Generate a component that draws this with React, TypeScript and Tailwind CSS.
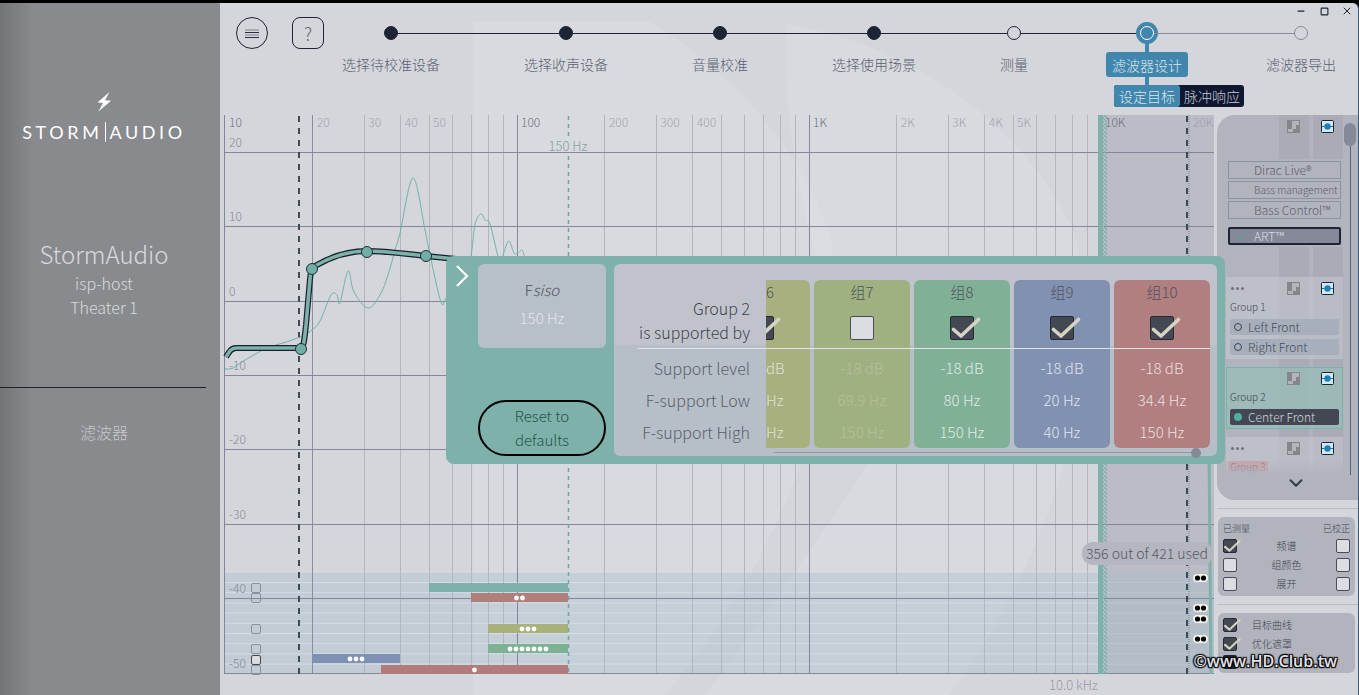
import React from 'react';
import { ChevronDown, Minus, Square, X } from 'lucide-react';

type Point = [number, number];

const steps = [
  { label: '选择待校准设备', state: 'done' },
  { label: '选择收声设备', state: 'done' },
  { label: '音量校准', state: 'done' },
  { label: '选择使用场景', state: 'done' },
  { label: '测量', state: 'open' },
  { label: '滤波器设计', state: 'active' },
  { label: '滤波器导出', state: 'todo' },
];

// The first column is scrolled half out of view, so only the tail of its texts shows
const supportGroups = [
  { name: '6', on: true, level: 'dB', low: 'Hz', high: 'Hz', bg: 'bg-[#a8b07f]', text: 'text-[#dfe2d4]', clipped: true },
  { name: '组7', on: false, level: '-18 dB', low: '69.9 Hz', high: '150 Hz', bg: 'bg-[#9fb180]', text: 'text-[#b3c09e]' },
  { name: '组8', on: true, level: '-18 dB', low: '80 Hz', high: '150 Hz', bg: 'bg-[#80b197]', text: 'text-[#dfebe5]' },
  { name: '组9', on: true, level: '-18 dB', low: '20 Hz', high: '40 Hz', bg: 'bg-[#8191b2]', text: 'text-[#dfe4ee]' },
  { name: '组10', on: true, level: '-18 dB', low: '34.4 Hz', high: '150 Hz', bg: 'bg-[#b17f7f]', text: 'text-[#eddfe0]' },
];

const supportRows: { label: string; key: 'level' | 'low' | 'high' }[] = [
  { label: 'Support level', key: 'level' },
  { label: 'F-support Low', key: 'low' },
  { label: 'F-support High', key: 'high' },
];

// Plot area: 292 units for each decade, starting at 10 Hz
const freqX = (f: number) => 1 + 292 * Math.log10(f / 10);

const minorLines = [20, 30, 40, 50, 60, 70, 80, 90, 200, 300, 400, 500, 600, 700, 800, 900, 2000, 3000, 4000, 5000, 6000, 7000, 8000, 9000];
const majorLines = [100, 1000, 10000];

const freqLabels = [
  { f: 10, label: '10', major: true },
  { f: 20, label: '20' },
  { f: 30, label: '30' },
  { f: 40, label: '40' },
  { f: 50, label: '50' },
  { f: 100, label: '100', major: true },
  { f: 200, label: '200' },
  { f: 300, label: '300' },
  { f: 400, label: '400' },
  { f: 1000, label: '1K', major: true },
  { f: 2000, label: '2K' },
  { f: 3000, label: '3K' },
  { f: 4000, label: '4K' },
  { f: 5000, label: '5K' },
  { f: 10000, label: '10K', major: true },
  { f: 20000, label: '20K' },
];

const dbLines = [
  { label: '20', y: 38 },
  { label: '10', y: 112 },
  { label: '0', y: 187 },
  { label: '-10', y: 261 },
  { label: '-20', y: 335 },
  { label: '-30', y: 410 },
  { label: '-40', y: 484 },
  { label: '-50', y: 559 },
];

const supportBars = [
  { x: 205, w: 139, y: 468, fill: '#7db1a9', dots: 0 },
  { x: 247, w: 97, y: 478, fill: '#b17f7b', dots: 2 },
  { x: 264, w: 80, y: 509, fill: '#a8b07b', dots: 3 },
  { x: 264, w: 80, y: 529, fill: '#7db194', dots: 7 },
  { x: 88, w: 88, y: 539, fill: '#7f90b5', dots: 3 },
  { x: 157, w: 187, y: 550, fill: '#b17b7b', dots: 1 },
];

const chartBoxes = [468, 478, 509, 529, 540, 550];
const eyeRows = [463, 493, 504, 524];

const measured: Point[] = [
  [1, 254], [9, 253], [21, 245], [43, 233], [59, 228], [76, 222], [88, 215], [96, 206], [107, 180], [113, 180],
  [116, 188], [124, 156], [130, 177], [144, 193], [156, 180], [164, 160], [171, 135], [176, 118], [189, 63],
  [201, 115], [205, 135], [217, 187], [223, 182], [240, 165], [247, 141], [251, 109], [257, 99], [261, 105],
  [266, 109], [274, 141], [278, 146], [280, 137], [285, 126], [290, 138], [294, 138], [298, 135], [301, 144],
];

const smooth = (pts: Point[]) =>
  pts.slice(1).reduce((d, p, i) => {
    const p0 = pts[i - 1] ?? pts[i];
    const p1 = pts[i];
    const p3 = pts[i + 2] ?? p;
    return `${d} C${p1[0] + (p[0] - p0[0]) / 6} ${p1[1] + (p[1] - p0[1]) / 6} ${p[0] - (p3[0] - p1[0]) / 6} ${p[1] - (p3[1] - p1[1]) / 6} ${p[0]} ${p[1]}`;
  }, `M${pts[0][0]} ${pts[0][1]}`);

const targetPath = 'M2 242 C5 237 7 233 12 233 L75 233 C80 233 80 228 82 210 L86 164 Q87 153 91 151 C108 141 124 136 143 136 C162 136 182 139 202 141 L232 144';

interface TickProps {
  label?: string;
  checked?: boolean;
  small?: boolean;
}

const Tick: React.FC<TickProps> = ({ label, checked, small }) => (
  <span className={`relative inline-block align-top ${small ? 'size-[14px]' : 'size-6'}`}>
    <input
      type="checkbox"
      aria-label={label}
      defaultChecked={checked}
      className="peer absolute inset-0 size-full appearance-none rounded-xs border border-[#4a4d57] bg-[#dcdde3] checked:border-[#252a36] checked:bg-[#434853]"
    />
    <svg viewBox="0 0 24 24" className="pointer-events-none absolute inset-0 hidden size-full overflow-visible peer-checked:block">
      <path d="M3.5 13.5 L11 20 L28.5 3.5" fill="none" stroke="#d6d4c2" strokeWidth="3.6" strokeLinecap="round" strokeLinejoin="round" />
    </svg>
  </span>
);

const ChannelIcons: React.FC = () => (
  <div className="flex justify-end gap-[21px] pr-[9px]">
    <svg viewBox="0 0 13 13" className="size-[13px]">
      <rect width="13" height="13" fill="#85868c" />
      <path d="M5 1H12V5H9V9H6V12H1V9H5Z" fill="#b4b5bb" />
    </svg>
    <svg viewBox="0 0 13 13" className="size-[13px]">
      <rect x="0.5" y="0.5" width="12" height="12" rx="1" fill="#d3e9f5" stroke="#1b2230" />
      <path d="M1 6.5H12" stroke="#1d7fb5" />
      <circle cx="6.5" cy="6.5" r="3.2" fill="#1d7fb5" />
    </svg>
  </div>
);

interface GroupCardProps {
  name: string;
  channels: string[];
  active?: boolean;
  tint?: boolean;
}

const GroupCard: React.FC<GroupCardProps> = ({ name, channels, active, tint }) => (
  <section className={`relative ${active ? 'bg-[#98bcb8]/75 outline-1 -outline-offset-1 outline-[#7db1a9]' : 'bg-[#c6c8d0]/60'}`}>
    {!active && (
      <span className="absolute top-[10px] left-[5px] flex gap-[2px]">
        <i className="size-[3px] rounded-full bg-[#70737e]" />
        <i className="size-[3px] rounded-full bg-[#70737e]" />
        <i className="size-[3px] rounded-full bg-[#70737e]" />
      </span>
    )}
    <div className="pt-[5px]"><ChannelIcons /></div>
    <h3 className={`mt-[6px] ml-[2px] w-max px-[2px] text-[10px] leading-[12px] ${tint ? 'bg-[#c9a3a6] text-[#7d7178]' : 'text-[#40434e]'}`}>{name}</h3>
    {channels.length > 0 && (
      <div className="flex flex-col gap-1 px-1 pt-[6px] pb-1">
        {channels.map(c => (
          <button
            key={c}
            type="button"
            className={`flex h-4 items-center gap-[6px] rounded-xs pl-1 text-xs leading-4 ${active ? 'bg-[#434753] text-[#d3d5db]' : 'bg-[#a6afbb] text-[#484c58]'}`}
          >
            <span className={`size-2 rounded-full ${active ? 'bg-[#4fae9c]' : 'border border-[#40434e]'}`} />
            {c}
          </button>
        ))}
      </div>
    )}
  </section>
);

const Sidebar: React.FC = () => (
  <aside className="w-[220px] shrink-0 bg-linear-to-r from-[#747577] via-[#898a8d] via-15% to-[#898a8d] pr-3 text-center text-[#d9dadd]">
    <svg viewBox="0 0 14 20" className="mx-auto mt-[89px] h-5 w-[14px]">
      <path d="M12.5 0 L0.5 10.5 L6 11 L1.5 19.5 L14 8.8 L8 8.3 Z" fill="#fff" />
    </svg>
    <div className="mt-2 flex items-center justify-center gap-[3px] font-['Lato'] text-lg leading-6 font-normal text-white">
      <span className="tracking-[0.2em]">STORM</span>
      <i className="h-5 w-px bg-white" />
      <span className="tracking-[0.2em]">AUDIO</span>
    </div>
    <h1 className="mt-[94px] text-2xl leading-8">StormAudio</h1>
    <p className="mt-px text-base leading-6">isp-host</p>
    <p className="text-base leading-6">Theater 1</p>
    <hr className="mt-[68px] mr-[2px] border-[#1d1f2b]" />
    <p className="mt-8 text-base leading-6 text-[#c6c7ca]">滤波器</p>
  </aside>
);

const Header: React.FC = () => (
  <header className="relative flex h-28 items-start pt-[14px] pl-4">
    <button type="button" className="relative z-10 mr-6 flex size-8 shrink-0 items-center justify-center rounded-full border border-[#1d2433]">
      <svg viewBox="0 0 14 9" className="h-[9px] w-[14px]">
        <path d="M0 1H14M0 6H14" stroke="#7f828f" />
        <path d="M0 3.5H14M0 8.5H14" stroke="#2a3042" />
      </svg>
    </button>
    <button type="button" className="relative z-10 flex size-8 shrink-0 items-center justify-center rounded-lg border border-[#1d2433] text-lg text-[#686b7b]">?</button>
    <ol className="-mr-5 -ml-6 flex flex-1">
      {steps.map((s, i) => (
        <li key={s.label} className="flex flex-auto flex-col items-center">
          <div className="flex h-8 w-full items-center">
            <span className={`h-px flex-1 ${i === 0 ? '' : i === steps.length - 1 ? 'bg-[#858997]' : 'bg-[#1d2433]'}`} />
            {s.state === 'active' ? (
              <span className="-mx-1 flex size-[22px] items-center justify-center rounded-full bg-[#4187ad]">
                <span className="size-[14px] rounded-full border border-white" />
              </span>
            ) : (
              <span className={`size-[14px] rounded-full border ${s.state === 'done' ? 'border-[#1d2433] bg-[#1d2433]' : s.state === 'open' ? 'border-[#1d2433]' : 'border-[#858997]'}`} />
            )}
            <span className={`h-px flex-1 ${i === steps.length - 1 ? '' : i === steps.length - 2 ? 'bg-[#858997]' : 'bg-[#1d2433]'}`} />
          </div>
          {s.state === 'active' ? (
            <div className="relative mx-9 mt-[3px]">
              <span className="absolute -top-3 left-1/2 h-12 w-1 -translate-x-1/2 bg-[#4187ad]" />
              <button type="button" className="relative block h-[25px] rounded-[3px] bg-[#4187ad] px-[6px] text-sm leading-6 whitespace-nowrap text-[#dbe6ee]">{s.label}</button>
              <div className="absolute top-full left-2 mt-2 flex w-max rounded-[3px] bg-[#0f1830]">
                <button type="button" className="h-[22px] rounded-[3px] bg-[#4187ad] px-[5px] text-sm leading-5 text-[#dbe6ee]">设定目标</button>
                <button type="button" className="h-[22px] px-1 text-sm leading-5 text-[#c6cad6]">脉冲响应</button>
              </div>
            </div>
          ) : (
            <span className="mt-[5px] px-[42px] text-sm leading-5 whitespace-nowrap text-[#5a5e70]">{s.label}</span>
          )}
        </li>
      ))}
    </ol>
    <div className="absolute top-[1px] right-0 flex items-center gap-[9px] text-[#1d2433]">
      <button type="button" className="flex size-[14px] items-center justify-center"><Minus size={10} strokeWidth={3} /></button>
      <button type="button" className="flex size-[14px] items-center justify-center"><Square size={9} strokeWidth={3} /></button>
      <button type="button" className="mr-1 flex size-[14px] items-center justify-center"><X size={12} strokeWidth={2} /></button>
    </div>
  </header>
);

const Chart: React.FC = () => (
  <div className="relative flex-1 self-start">
    <svg viewBox="0 0 990 580" className="block h-auto w-full overflow-visible">
      <defs>
        <pattern id="hatch" width="4" height="4" patternUnits="userSpaceOnUse">
          <path d="M0 0L4 4" stroke="#7db1a9" strokeWidth="1.4" />
        </pattern>
        <pattern id="rows" width="10" height="10.2" patternUnits="userSpaceOnUse" y="467">
          <path d="M0 0.5H10" stroke="#dfe5ea" strokeOpacity="0.7" />
        </pattern>
      </defs>

      <rect x="879" y="0" width="111" height="559" fill="#a2a1af" fillOpacity="0.5" />
      <rect x="0" y="458" width="990" height="101" fill="#a4bfca" fillOpacity="0.4" />
      <rect x="0" y="467" width="879" height="92" fill="url(#rows)" />
      <rect x="879" y="467" width="111" height="92" fill="url(#rows)" fillOpacity="0.3" />

      {minorLines.map(f => (
        <path key={f} d={`M${Math.floor(freqX(f)) + 0.5} 0V559`} stroke={f === 20 ? '#8b8d9f' : '#b3b5c0'} />
      ))}
      {majorLines.map(f => (
        <path key={f} d={`M${Math.round(freqX(f)) + 0.5} 0V559`} stroke="#84879a" />
      ))}
      <path d="M0.5 0V559" stroke="#84879a" />
      <path d={`M${freqX(20000)} 0V559`} stroke="#84879a" strokeDasharray="1 1" />
      {dbLines.map(l => (
        <path key={l.y} d={`M0 ${l.y - 0.5}H990`} stroke="#84879a" />
      ))}

      {supportBars.map(b => (
        <g key={b.y}>
          <rect x={b.x} y={b.y} width={b.w} height="9" fill={b.fill} />
          {Array.from({ length: b.dots }, (_, i) => (
            <circle key={i} cx={b.x + b.w / 2 + (i - (b.dots - 1) / 2) * 6} cy={b.y + 5} r="2.4" fill="#fff" />
          ))}
        </g>
      ))}

      <path d="M344.5 1V22M344.5 41V559" stroke="#6fa79f" strokeWidth="1.5" strokeDasharray="4 4" />
      <path d="M75 1V559" stroke="#3b4b52" strokeWidth="2" strokeDasharray="6 6" />
      <path d="M963 1V559" stroke="#3b4b52" strokeWidth="2" strokeDasharray="6 6" />
      <rect x="874" y="0" width="5" height="559" fill="#7db1a9" />
      <rect x="879" y="0" width="4" height="559" fill="url(#hatch)" />

      <path d={smooth(measured)} fill="none" stroke="#6fb3a9" strokeWidth="1" />
      <path d={targetPath} fill="none" stroke="#14212a" strokeWidth="6" />
      <path d={targetPath} fill="none" stroke="#7db1a9" strokeWidth="3.6" />
      <path d="M985 330L987 559" stroke="#7db1a9" strokeWidth="3" />
      {[[77, 234], [88, 154], [143, 137], [202, 141]].map(([x, y]) => (
        <circle key={x} cx={x} cy={y} r="5.5" fill="#71afa6" stroke="#1c3038" />
      ))}

      {freqLabels.map(l => (
        <text key={l.f} x={freqX(l.f) + 4} y="12" fontSize="12" fill={l.major ? '#6c6f7e' : '#a0a2af'}>{l.label}</text>
      ))}
      {dbLines.map(l => (
        <text key={l.label} x="5" y={l.y - 6} fontSize="12" fill="#858897">{l.label}</text>
      ))}
      <text x="344" y="36" fontSize="13" textAnchor="middle" fill="#83a39f">150 Hz</text>

      <rect x="858" y="427" width="131" height="23" rx="11" fill="#b5b6c0" />
      <text x="923" y="444" fontSize="14" textAnchor="middle" fill="#555869">356 out of 421 used</text>
      {eyeRows.map(y => (
        <g key={y}>
          <rect x="969" y={y - 4} width="15" height="8" rx="4" fill="#f4f4ea" />
          <circle cx="973.5" cy={y} r="2.6" fill="#000" />
          <circle cx="979.5" cy={y} r="2.6" fill="#000" />
        </g>
      ))}
      <text x="874" y="575" fontSize="13" textAnchor="end" fill="#9d97a4">10.0 kHz</text>
    </svg>

    {chartBoxes.map(y => (
      <input
        key={y}
        type="checkbox"
        aria-label={`${y}`}
        className={`absolute left-[2.7%] size-[10px] appearance-none rounded-[2px] border ${y === 540 ? 'border-[#44474f] bg-[#dcdde3]' : 'border-[#8b909c]'}`}
        style={{ top: `${(y / 580) * 100}%` }}
      />
    ))}
  </div>
);

const GroupPanel: React.FC = () => (
  <aside className="relative w-[141px] shrink-0">
    <div className="relative flex h-[385px] flex-col overflow-hidden rounded-l-[18px] bg-[#b1b3bd] pr-[15px] pl-[9px]">
      <span className="absolute top-0 left-[62px] h-[360px] w-[30px] bg-[#9d9fab]/40" />
      <span className="absolute top-0 left-[96px] h-[360px] w-[30px] bg-[#9d9fab]/40" />
      <div className="relative pt-[5px]"><ChannelIcons /></div>
      <div className="relative mt-[26px] flex flex-col gap-[2px] bg-[#b1b3bd] px-[2px] py-[2px] text-[#5d606e]">
        <button type="button" className="h-[18px] border border-[#8e919f] pl-[25px] text-left text-xs leading-4">Dirac Live®</button>
        <button type="button" className="h-[18px] border border-[#8e919f] pl-[25px] text-left text-[10px] leading-4 whitespace-nowrap">Bass management</button>
        <button type="button" className="h-[18px] border border-[#8e919f] pl-[25px] text-left text-xs leading-4">Bass Control™</button>
        <button type="button" className="relative mt-[6px] h-[18px] rounded-xs border-2 border-[#1d2433] bg-[#858998] pl-6 text-left text-xs leading-[14px] text-[#dcdde3]">
          <svg viewBox="0 0 12 8" className="absolute top-[3px] left-[6px] h-2 w-3">
            <path d="M1 4.5L4 7L11 1" fill="none" stroke="#6f9a9c" strokeWidth="1.5" />
          </svg>
          ART™
        </button>
      </div>
      <div className="mt-[30px] flex flex-col gap-2">
        <GroupCard name="Group 1" channels={['Left Front', 'Right Front']} />
        <GroupCard name="Group 2" channels={['Center Front']} active />
        <GroupCard name="Group 3" channels={[]} tint />
      </div>
      <span className="absolute inset-x-0 bottom-0 flex h-10 items-center justify-center bg-linear-to-b from-[#b1b3bd]/0 to-[#b1b3bd] to-40% pt-[6px] pl-4 text-[#343845]">
        <ChevronDown size={22} strokeWidth={2.2} />
      </span>
      <span className="absolute top-2 right-[2px] flex h-[352px] w-3 flex-col items-center">
        <i className="h-[23px] w-full rounded-full bg-[#868998]" />
        <i className="w-px flex-1 bg-[#5f6270]" />
      </span>
    </div>

    <hr className="mt-2 border-[#b9bbc4]" />
    <div className="mt-2 mr-[3px] ml-px rounded-md bg-[#b1b3bd] px-[5px] pt-1 pb-[3px] text-[10px] text-[#40434e]">
      <div className="flex h-[15px] items-center justify-between text-[9px]">
        <span>已测量</span>
        <span>已校正</span>
      </div>
      {[['频谱', true], ['组颜色', false], ['展开', false]].map(([label, on]) => (
        <div key={label as string} className="flex h-[19px] items-center justify-between">
          <Tick small checked={on as boolean} label={label as string} />
          <span>{label}</span>
          <Tick small label={label as string} />
        </div>
      ))}
    </div>
    <hr className="mt-2 border-[#b9bbc4]" />
    <div className="relative mt-2 mr-[3px] ml-px h-[60px] rounded-md bg-[#b1b3bd] px-[5px] pt-[2px] text-[10px] text-[#40434e]">
      {['目标曲线', '优化遮罩'].map(label => (
        <label key={label} className="flex h-[19px] items-center gap-[15px]">
          <Tick small checked />
          {label}
        </label>
      ))}
      <span className="mt-[2px] block size-[14px] rounded-xs bg-[#1d2433]" />
      <span className="absolute right-[18px] bottom-0 font-['Open_Sans'] text-base leading-6 font-semibold whitespace-nowrap text-[#e4e4ea] [text-shadow:1px_1px_1px_#000,-1px_-1px_1px_#000,1px_-1px_1px_#000,-1px_1px_1px_#000,0_0_2px_#000]">
        ©www.HD.Club.tw
      </span>
    </div>
  </aside>
);

const SupportPanel: React.FC = () => (
  <div className="absolute top-[253px] right-[133px] flex w-[779px] gap-2 rounded-lg bg-[#7db1a9] p-2 text-[15px]">
    <button type="button" className="-mx-1 flex h-6 w-6 shrink-0 items-center justify-center self-start text-white">
      <svg viewBox="0 0 14 22" className="h-[22px] w-[14px]">
        <path d="M2 1L12 11L2 21" fill="none" stroke="currentColor" strokeWidth="2.2" />
      </svg>
    </button>
    <div className="flex w-32 shrink-0 flex-col justify-between">
      <div className="h-[84px] rounded-md bg-[#b7bfc8] pt-3 text-center leading-7">
        <p className="text-[#50535f]">F<em>siso</em></p>
        <p className="text-[#e3e6eb]">150 Hz</p>
      </div>
      <button type="button" className="h-14 rounded-full border-2 border-black px-6 leading-6 text-[#275750]">Reset to defaults</button>
    </div>
    <div className="relative h-48 flex-1 rounded-md bg-linear-to-b from-[#c1c3cc] from-42% to-[#b6bfc7] to-42% pt-4 pl-5">
      <table className="border-separate border-spacing-x-1 border-spacing-y-0">
        <thead>
          <tr className="h-[72px]">
            <th className="w-31 min-w-31 p-0 pt-2 pr-3 text-right text-base leading-6 font-light text-[#40434e]">Group 2<br />is supported by</th>
            {supportGroups.map(g => (
              <th key={g.name} className={`p-0 align-top font-light text-[#50535f] ${g.bg} ${g.clipped ? 'rounded-tr-md' : 'rounded-t-md'}`}>
                <div className={`overflow-hidden ${g.clipped ? 'w-11 text-left' : 'w-24 text-center'}`}>
                  <p className="mb-3 leading-6">{g.name}</p>
                  <span className={g.clipped ? '-ml-4' : ''}><Tick checked={g.on} label={g.name} /></span>
                </div>
              </th>
            ))}
          </tr>
        </thead>
        <tbody>
          {supportRows.map((r, i) => (
            <tr key={r.key} className="h-8">
              <th className="p-0 pr-3 text-right text-base leading-8 font-light text-[#5a606d]">{r.label}</th>
              {supportGroups.map(g => (
                <td key={g.name} className={`p-0 leading-8 whitespace-nowrap ${g.bg} ${g.text} ${g.clipped ? 'text-left' : 'text-center'} ${i < 2 ? '' : g.clipped ? 'rounded-br-md' : 'rounded-b-md'}`}>
                  {g[r.key]}
                </td>
              ))}
            </tr>
          ))}
        </tbody>
      </table>
      <span className="absolute top-[84px] right-[7px] left-6 h-px bg-[#e1e4e6]" />
      <input
        type="range"
        aria-label="Group 2"
        defaultValue={100}
        className="absolute right-4 bottom-[-3px] left-40 h-[13px] appearance-none bg-linear-to-b from-transparent from-44% via-[#5a5d6c] via-44% to-transparent to-54% [&::-webkit-slider-thumb]:size-[10px] [&::-webkit-slider-thumb]:appearance-none [&::-webkit-slider-thumb]:rounded-full [&::-webkit-slider-thumb]:bg-[#868998]"
      />
    </div>
  </div>
);

const App: React.FC = () => {
  return (
    <div className="flex min-h-screen flex-col bg-black pt-[3px] font-['Noto_Sans_CJK_SC',sans-serif] font-light">
      <div className="flex flex-1">
        <Sidebar />
        <main className="relative flex flex-1 flex-col overflow-hidden rounded-tr-md border-r border-[#3c5878] bg-[#d5d6dc]">
          <svg viewBox="0 0 1139 692" preserveAspectRatio="none" className="absolute inset-0 size-full">
            <path d="M253 18H428C520 70 590 160 612 240C630 380 560 560 445 692H253Z" fill="#fff" fillOpacity="0.1" />
            <path d="M567 21C680 40 800 110 855 230C900 400 800 600 730 692H485C540 620 640 480 660 440C590 260 560 130 567 21Z" fill="#fff" fillOpacity="0.1" />
          </svg>
          <Header />
          <div className="relative flex flex-1 gap-[3px] pl-1">
            <Chart />
            <GroupPanel />
          </div>
          <SupportPanel />
        </main>
      </div>
    </div>
  );
};

export default App;
